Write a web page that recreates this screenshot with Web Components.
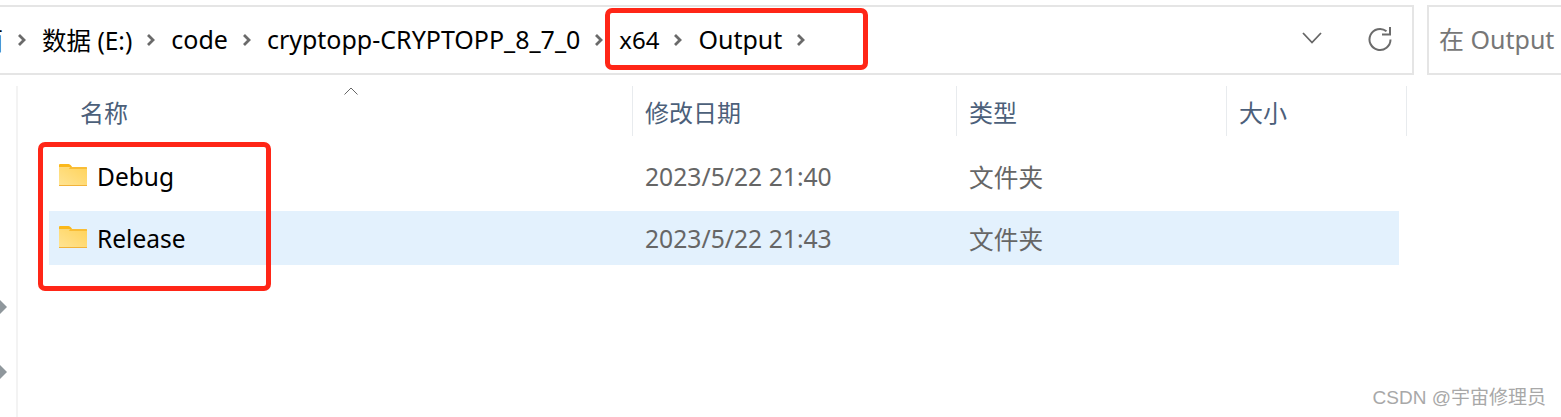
<!DOCTYPE html>
<html lang="zh">
<head>
<meta charset="utf-8">
<title>Output</title>
<style>
  html, body {
    margin: 0;
    height: 100%;
    overflow: hidden;
    background: #fff;
  }
  body {
    position: relative;
    font-family: "Noto Sans", "Noto Sans CJK SC", sans-serif;
  }
</style>
</head>
<body>
<explorer-window></explorer-window>
<script>
/**
 * Small helper, every element gets its shadow root from a template.
 *
 * @param {string} html - The markup of the template.
 * @returns {HTMLTemplateElement} - The template.
 */
const makeTemplate = (html) => {
  const template = document.createElement('template')
  template.innerHTML = html
  return template
}

const folderTemplate = makeTemplate(`
 <style>
  :host { display: block; width: 28px; height: 22px; flex: none; }
  svg { display: block; }
 </style>
 <svg width="28" height="22" viewBox="0 0 28 22">
  <defs>
   <linearGradient id="body" x1="0" y1="1" x2="1" y2="0">
    <stop offset="0" stop-color="#ffe494"/>
    <stop offset="1" stop-color="#ffd35c"/>
   </linearGradient>
  </defs>
  <path d="M1 0H9.5Q11 0 12 1.5L13.5 3.5H0V1Q0 0 1 0Z" fill="#fbb81b"/>
  <path d="M0 3.5H27Q28 3.5 28 4.5V21Q28 22 27 22H1Q0 22 0 21Z" fill="url(#body)"/>
  <path d="M11 3H27.5Q28 3 28 4V5H10Z" fill="#f9bd35"/>
  <rect x="0" y="21" width="28" height="1" fill="#f2b33a"/>
 </svg>
`)

customElements.define(
  'folder-icon',
  /**
   * The yellow folder glyph.
   */
  class extends HTMLElement {
    /**
     * Creates an instance of the current type.
     */
    constructor () {
      super()
      this.attachShadow({ mode: 'open' }).appendChild(
        folderTemplate.content.cloneNode(true)
      )
    }
  }
)

const crumbTemplate = makeTemplate(`
 <style>
  :host {
    display: flex;
    align-items: center;
    gap: 14px;
    flex: none;
    color: #000;
    font-size: 25px;
    white-space: nowrap;
  }
  svg { display: block; flex: none; margin-top: 1px; }
 </style>
 <span><slot></slot></span>
 <svg width="9" height="14" viewBox="0 0 9 14">
  <path d="M2 2L7 7L2 12" fill="none" stroke="#6a6a6a" stroke-width="2.8"/>
 </svg>
`)

customElements.define(
  'path-crumb',
  /**
   * One part of the breadcrumb with its chevron.
   */
  class extends HTMLElement {
    /**
     * Creates an instance of the current type.
     */
    constructor () {
      super()
      this.attachShadow({ mode: 'open' }).appendChild(
        crumbTemplate.content.cloneNode(true)
      )
    }
  }
)

const toolbarTemplate = makeTemplate(`
 <style>
  :host {
    display: flex;
    margin: 5px -30px 0 -30px;
    height: 70px;
    gap: 13px;
  }
  #address, #search {
    box-sizing: border-box;
    height: 70px;
    border: 2px solid #e5e5e5;
    display: flex;
    align-items: center;
    background: #fff;
  }
  #address {
    width: 1444px;
    flex: none;
    padding: 0 0 2px 6px;
    gap: 16px;
  }
  #actions {
    margin-left: auto;
    display: flex;
    align-items: center;
    gap: 46px;
    padding-right: 20px;
  }
  #actions svg:first-child { margin-top: -2px; }
  svg { display: block; }
  #search {
    flex: 1;
    padding: 0 0 4px 10px;
    color: #777;
    font-size: 25px;
    white-space: nowrap;
  }
 </style>
 <div id="address">
  <path-crumb>面</path-crumb>
  <path-crumb style="font-size: 24.5px">数据 (E:)</path-crumb>
  <path-crumb>code</path-crumb>
  <path-crumb>cryptopp-CRYPTOPP_8_7_0</path-crumb>
  <path-crumb style="font-size: 24px">x64</path-crumb>
  <path-crumb>Output</path-crumb>
  <div id="actions">
   <svg width="20" height="12" viewBox="0 0 20 12">
    <path d="M1 1L10 10.5L19 1" fill="none" stroke="#666" stroke-width="1.8"/>
   </svg>
   <svg width="24" height="24" viewBox="0 0 24 24">
    <path d="M18.5 4.2A10.5 10.5 0 1 0 22.5 12.5" fill="none" stroke="#6b6b6b" stroke-width="2"/>
    <path d="M22 0V7.5H14" fill="none" stroke="#6b6b6b" stroke-width="2"/>
   </svg>
  </div>
 </div>
 <div id="search">在 Output</div>
`)

customElements.define(
  'address-toolbar',
  /**
   * The address bar and the search box.
   */
  class extends HTMLElement {
    /**
     * Creates an instance of the current type.
     */
    constructor () {
      super()
      this.attachShadow({ mode: 'open' }).appendChild(
        toolbarTemplate.content.cloneNode(true)
      )
    }
  }
)

const headerTemplate = makeTemplate(`
 <style>
  :host {
    display: grid;
    grid-template-columns: 615px 324px 270px 180px;
    height: 50px;
    position: relative;
    color: #4c607a;
    font-size: 24px;
    font-family: "Noto Sans CJK SC", sans-serif;
  }
  span {
    box-sizing: border-box;
    display: flex;
    align-items: center;
    padding-left: 12px;
    border-right: 1px solid #e8ebee;
  }
  span:first-of-type { padding-left: 62px; }
  svg { position: absolute; left: 326px; top: 1px; }
 </style>
 <span>名称</span>
 <span>修改日期</span>
 <span>类型</span>
 <span>大小</span>
 <svg width="14" height="8" viewBox="0 0 14 8">
  <path d="M0.5 7.5L7 1L13.5 7.5" fill="none" stroke="#666" stroke-width="1"/>
 </svg>
`)

customElements.define(
  'column-header',
  /**
   * The header row of the file list.
   */
  class extends HTMLElement {
    /**
     * Creates an instance of the current type.
     */
    constructor () {
      super()
      this.attachShadow({ mode: 'open' }).appendChild(
        headerTemplate.content.cloneNode(true)
      )
    }
  }
)

const rowTemplate = makeTemplate(`
 <style>
  :host {
    display: grid;
    grid-template-columns: 596px 324px 1fr;
    align-items: center;
    width: 1350px;
    height: 54px;
    margin-left: 31px;
    font-size: 24.7px;
    color: #666;
    white-space: nowrap;
  }
  :host([selected]) { background: #e3f1fd; }
  #name {
    display: flex;
    align-items: center;
    gap: 10px;
    padding-left: 10px;
    color: #000;
    font-size: 24.5px;
  }
  folder-icon { margin-top: -3px; }
 </style>
 <div id="name"><folder-icon></folder-icon><slot></slot></div>
 <div><slot name="date"></slot></div>
 <div><slot name="type"></slot></div>
`)

customElements.define(
  'file-row',
  /**
   * One row of the file list.
   */
  class extends HTMLElement {
    /**
     * Creates an instance of the current type.
     */
    constructor () {
      super()
      this.attachShadow({ mode: 'open' }).appendChild(
        rowTemplate.content.cloneNode(true)
      )
    }
  }
)

const markTemplate = makeTemplate(`
 <style>
  :host {
    display: block;
    position: absolute;
    box-sizing: border-box;
    border: 5px solid #ff2617;
    border-radius: 7px;
    pointer-events: none;
  }
 </style>
`)

customElements.define(
  'red-mark',
  /**
   * The red rectangle drawn over the screenshot, placed from its attributes.
   */
  class extends HTMLElement {
    /**
     * Creates an instance of the current type.
     */
    constructor () {
      super()
      this.attachShadow({ mode: 'open' }).appendChild(
        markTemplate.content.cloneNode(true)
      )
    }

    /**
     * Reads the box from the attributes.
     */
    connectedCallback () {
      const [x, y, w, h] = this.getAttribute('box').split(' ')
      this.style.cssText = `left:${x}px;top:${y}px;width:${w}px;height:${h}px`
    }
  }
)

const windowTemplate = makeTemplate(`
 <style>
  :host {
    display: block;
    height: 417px;
    width: 1561px;
    position: relative;
    overflow: hidden;
  }
  #main {
    display: flex;
    margin-top: 11px;
    height: 332px;
  }
  #nav {
    width: 16px;
    flex: none;
    display: flex;
    flex-direction: column;
    gap: 51px;
    padding-top: 214px;
    box-sizing: border-box;
  }
  #nav svg { display: block; }
  #list {
    flex: 1;
    border-left: 2px solid #f3f3f3;
  }
  #rows {
    display: flex;
    flex-direction: column;
    gap: 8px;
    padding-top: 13px;
  }
  #watermark {
    position: absolute;
    right: 15px;
    top: 382px;
    font: 19px "Liberation Sans", "Noto Sans CJK SC", sans-serif;
    color: #a8a8a8;
    white-space: nowrap;
  }
 </style>
 <address-toolbar></address-toolbar>
 <div id="main">
  <div id="nav">
   <svg width="8" height="14" viewBox="0 0 8 14"><path d="M0 0L7 7L0 14Z" fill="#8f979c"/></svg>
   <svg width="8" height="14" viewBox="0 0 8 14"><path d="M0 0L7 7L0 14Z" fill="#8f979c"/></svg>
  </div>
  <div id="list">
   <column-header></column-header>
   <div id="rows">
    <file-row>Debug<span slot="date">2023/5/22 21:40</span><span slot="type">文件夹</span></file-row>
    <file-row selected>Release<span slot="date">2023/5/22 21:43</span><span slot="type">文件夹</span></file-row>
   </div>
  </div>
 </div>
 <red-mark box="605 8 263 62"></red-mark>
 <red-mark box="38 142 233 149"></red-mark>
 <div id="watermark">CSDN @宇宙修理员</div>
`)

customElements.define(
  'explorer-window',
  /**
   * The whole page.
   */
  class extends HTMLElement {
    /**
     * Creates an instance of the current type.
     */
    constructor () {
      super()
      this.attachShadow({ mode: 'open' }).appendChild(
        windowTemplate.content.cloneNode(true)
      )
    }
  }
)
</script>
</body>
</html>
